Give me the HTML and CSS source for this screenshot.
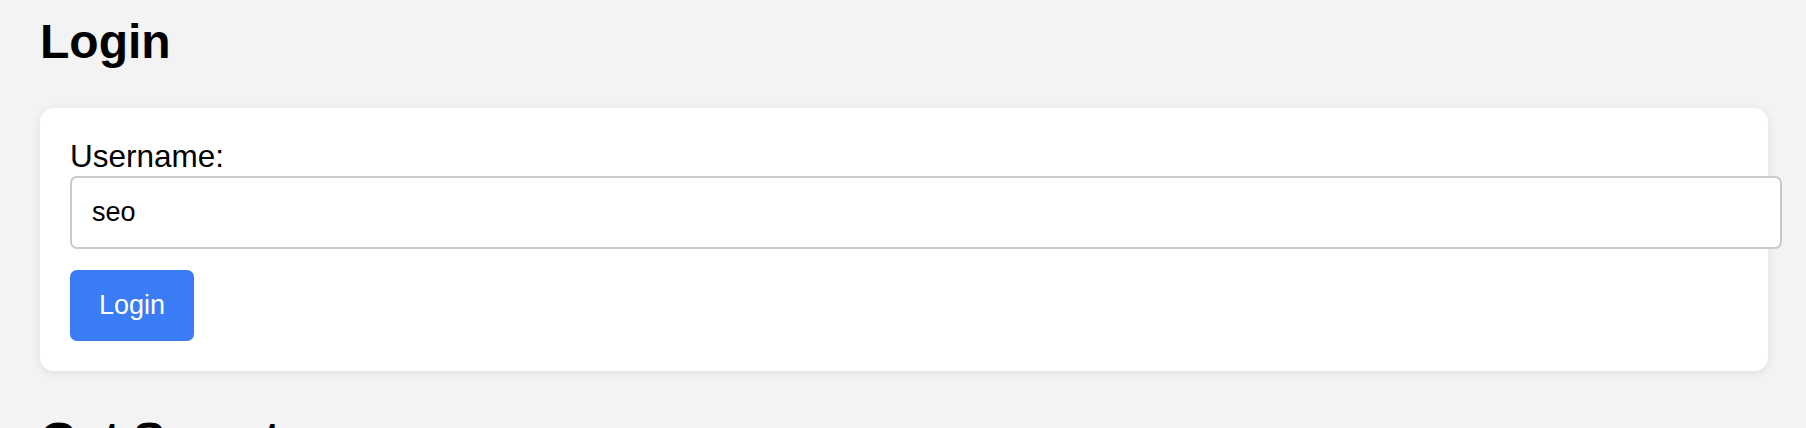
FILE: index.html
```html
<!DOCTYPE html>
<html lang="en">
<head>
<meta charset="utf-8">
<title>Login</title>
<link rel="stylesheet" href="styles.css">
</head>
<body>
  <main class="page">
    <section class="section">
      <h1 class="title">Login</h1>
      <form class="card">
        <label class="label" for="username">Username:</label>
        <input class="input" id="username" type="text" value="seo">
        <button class="btn" type="button">Login</button>
      </form>
    </section>
    <section class="section">
      <h1 class="title">Get Secret</h1>
    </section>
  </main>
</body>
</html>
```

FILE: styles.css
```css
html, body {
  margin: 0;
  padding: 0;
  background: #f3f3f3;
}

body {
  font-family: "Liberation Sans", Arial, Helvetica, sans-serif;
  color: #000;
}

.page {
  padding: 15px 38px 0 40px;
  display: flex;
  flex-direction: column;
}

.title {
  margin: 0 0 39px 0;
  font-size: 48px;
  font-weight: 700;
  line-height: 54px;
}

.card {
  background: #fff;
  border-radius: 14px;
  padding: 30px;
  margin: 0 0 42px 0;
  box-shadow: 0 2px 8px rgba(0, 0, 0, 0.09);
  display: flex;
  flex-direction: column;
  align-items: flex-start;
}

.label {
  font-size: 31.5px;
  line-height: 36px;
  margin-bottom: 2px;
}

.input {
  box-sizing: content-box;
  width: 100%;
  padding: 19px 20px;
  border: 2px solid #cacaca;
  border-radius: 7px;
  font-family: "Liberation Sans", Arial, Helvetica, sans-serif;
  font-size: 27px;
  line-height: 31px;
  height: 31px;
  color: #000;
  background: #fff;
  margin: 0;
  outline: none;
}

.btn {
  margin-top: 21px;
  background: #3a7cf6;
  color: #fff;
  border: none;
  border-radius: 7px;
  font-family: "Liberation Sans", Arial, Helvetica, sans-serif;
  font-size: 27px;
  line-height: 31px;
  padding: 20px 29px;
  cursor: pointer;
}
```
